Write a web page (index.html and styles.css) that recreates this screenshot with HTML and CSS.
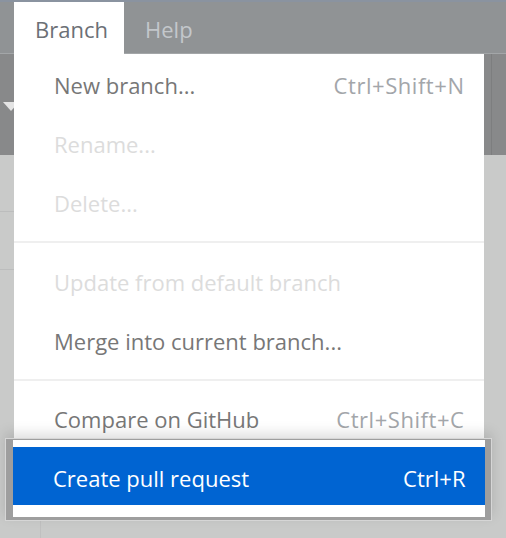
FILE: index.html
```html
<!DOCTYPE html>
<html>
<head>
<meta charset="utf-8">
<link rel="stylesheet" href="styles.css">
</head>
<body>
<div class="screen">
  <div class="topline"></div>
  <div class="menubar">
    <div class="tab active">Branch</div>
    <div class="tab">Help</div>
  </div>
  <div class="app">
    <div class="toolbar">
      <svg class="caret" width="20" height="12" viewBox="0 0 20 12"><polygon points="3,1 19,1 11,10" fill="#e4e4e4"/></svg>
      <div class="vline"></div>
    </div>
    <div class="content">
      <div class="hline l1"></div>
      <div class="hline l2"></div>
      <div class="vfaint"></div>
    </div>
  </div>

  <div class="dropdown">
    <div class="item"><span class="label">New branch...</span><span class="key">Ctrl+Shift+N</span></div>
    <div class="item disabled"><span class="label">Rename...</span></div>
    <div class="item disabled"><span class="label">Delete...</span></div>
    <div class="sep"></div>
    <div class="item disabled"><span class="label">Update from default branch</span></div>
    <div class="item"><span class="label">Merge into current branch...</span></div>
    <div class="sep"></div>
    <div class="item"><span class="label">Compare on GitHub</span><span class="key">Ctrl+Shift+C</span></div>
    <div class="frame">
      <div class="frame-inner">
        <div class="item selected"><span class="label">Create pull request</span><span class="key">Ctrl+R</span></div>
      </div>
    </div>
  </div>
</div>
</body>
</html>
```

FILE: styles.css
```css
* { box-sizing: border-box; }
html, body { margin: 0; padding: 0; }
body {
  width: 506px;
  height: 538px;
  overflow: hidden;
  background: #c9cac9;
  font-family: "Open Sans", "Noto Sans", sans-serif;
}
.screen {
  position: relative;
  width: 506px;
  height: 538px;
  display: flex;
  flex-direction: column;
}
.topline {
  height: 2px;
  background: #8a93a0;
}
.menubar {
  height: 52px;
  background: #909395;
  display: flex;
  padding-left: 14px;
  border-bottom: 1px solid #a3a6a8;
}
.tab {
  padding: 2px 20px 0 21px;
  display: flex;
  align-items: center;
  font-size: 22px;
  color: #c3c7cb;
}
.tab.active {
  background: #ffffff;
  color: #6c7076;
  width: 110px;
  margin-bottom: -1px;
}
.app {
  flex: 1;
  display: flex;
  flex-direction: column;
}
.toolbar {
  height: 101px;
  background: #88898a;
  position: relative;
}
.caret {
  position: absolute;
  left: 0;
  top: 101px;
  margin-top: -54px;
}
.vline {
  position: absolute;
  left: 491px;
  top: 0;
  width: 1px;
  height: 101px;
  background: #7d7e7f;
}
.content {
  flex: 1;
  position: relative;
}
.hline {
  position: absolute;
  left: 0;
  width: 14px;
  height: 1px;
  background: #bcbdbd;
}
.l1 { top: 56px; }
.l2 { top: 114px; }
.vfaint {
  position: absolute;
  left: 40px;
  top: 362px;
  width: 1px;
  height: 40px;
  background: #c0c0c0;
}
.dropdown {
  position: absolute;
  left: 14px;
  top: 54px;
  width: 470px;
  background: #ffffff;
  padding-top: 1.5px;
  display: flex;
  flex-direction: column;
}
.item {
  height: 59px;
  display: flex;
  align-items: center;
  justify-content: space-between;
  padding: 0 20px 0 40px;
  font-size: 22px;
  color: #777777;
  white-space: nowrap;
}
.item .key {
  color: #a3a6aa;
  letter-spacing: 0.55px;
  margin-right: -0.5px;
}
.item.disabled {
  color: #dcdcdc;
}
.sep {
  height: 19.5px;
  display: flex;
  align-items: center;
}
.sep::before {
  content: "";
  display: block;
  width: 100%;
  height: 2px;
  background: #efefef;
}
.frame {
  margin: -10.5px -8px 0 -9px;
  border: 1.5px solid #d6d6d6;
  box-shadow: 0 -5px 12px rgba(0, 0, 0, 0.13);
  position: relative;
}
.frame-inner {
  border-style: solid;
  border-color: #9e9e9e;
  border-width: 1px 6px 3px 7px;
  background: #ffffff;
  padding: 7px 0 12px 0;
}
.item.selected {
  height: 58px;
  background: #0064d2;
  color: #ffffff;
  padding-top: 4px;
}
.item.selected .key {
  color: #ffffff;
  letter-spacing: 0;
}
```
